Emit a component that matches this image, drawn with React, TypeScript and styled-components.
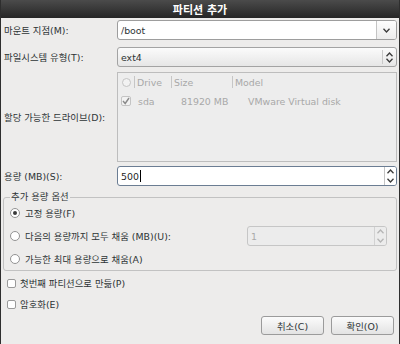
import styled, { createGlobalStyle } from "styled-components";

const GlobalStyle = createGlobalStyle`
  html, body {
    margin: 0;
    padding: 0;
    background-color: #edeceb;
  }
  * {
    box-sizing: border-box;
  }
`;

const FONT = `"DejaVu Sans", "Noto Sans CJK KR", sans-serif`;

const Window = styled.div`
  width: 400px;
  height: 344px;
  display: flex;
  flex-direction: column;
  background-color: #edeceb;
  border-left: 1px solid #2e2e2e;
  border-right: 1px solid #2e2e2e;
  font-family: ${FONT};
  font-size: 9.4px;
  color: #2e3436;
  overflow: hidden;
`;

const TitleBar = styled.div`
  height: 18px;
  flex: none;
  display: flex;
  align-items: center;
  justify-content: center;
  background: linear-gradient(#4b4b4b, #262626);
  color: #ffffff;
  font-weight: bold;
  font-size: 11px;
`;

const Body = styled.div`
  flex: 1;
  display: flex;
  flex-direction: column;
  padding: 2px 2px 0 2px;
`;

const FormGrid = styled.div`
  display: grid;
  grid-template-columns: 114px 1fr;
  align-items: center;
`;

const Label = styled.label<{ $topGap?: number }>`
  padding-left: 1px;
  margin-top: ${(p) => p.$topGap ?? 0}px;
  white-space: nowrap;
`;

const Field = styled.div`
  display: flex;
  height: 20px;
  border: 1px solid #9d9d9d;
  border-radius: 3px;
  background-color: #ffffff;
  overflow: hidden;
`;

const FieldText = styled.div<{ $pad?: number }>`
  flex: 1;
  display: flex;
  align-items: center;
  padding-left: ${(p) => p.$pad ?? 3}px;
`;

const DropButton = styled.div`
  width: 20px;
  display: flex;
  align-items: center;
  justify-content: center;
  border-left: 1px solid #c4c4c4;
  background: linear-gradient(#fdfdfd, #ececec);
`;

const Combo = styled.div`
  display: flex;
  align-items: center;
  height: 20px;
  margin-top: 7px;
  padding: 0 3px 0 3px;
  border: 1px solid #a3a3a3;
  border-radius: 3px;
  background: linear-gradient(#fbfbfb, #e6e6e6);
`;

const ComboSep = styled.div`
  width: 1px;
  height: 14px;
  background-color: #c8c8c8;
  margin-right: 3px;
`;

const ArrowStack = styled.div`
  display: flex;
  flex-direction: column;
  gap: 1px;
`;

const DriveList = styled.div`
  height: 90px;
  margin-top: 5px;
  border: 1px solid #bdbdbd;
  background-color: #ededed;
  color: #a8a8a8;
`;

const ListHeader = styled.div`
  display: grid;
  grid-template-columns: 16px 37px 61px 1fr;
  height: 18px;
  align-items: center;
`;

const HeadCell = styled.div<{ $sep?: boolean }>`
  display: flex;
  align-items: center;
  height: 12px;
  padding-left: ${(p) => (p.$sep ? 2 : 4)}px;
  border-left: ${(p) => (p.$sep ? "1px solid #c6c6c6" : "none")};
`;

const ListRow = styled.div`
  display: grid;
  grid-template-columns: 17px 43px 67px 1fr;
  height: 20px;
  align-items: center;
  padding-left: 3px;
`;

const Box = styled.span<{ $size?: number; $dim?: boolean; $round?: boolean }>`
  width: ${(p) => p.$size ?? 10}px;
  height: ${(p) => p.$size ?? 10}px;
  display: inline-flex;
  align-items: center;
  justify-content: center;
  flex: none;
  border: 1px solid ${(p) => (p.$dim ? "#c4c4c4" : "#9a9a9a")};
  border-radius: ${(p) => (p.$round ? "50%" : "2px")};
  background-color: ${(p) => (p.$dim ? "#f2f2f2" : "#ffffff")};
`;

const SpinField = styled.div<{ $disabled?: boolean; $topGap?: number }>`
  display: flex;
  height: 20px;
  margin-top: ${(p) => p.$topGap ?? 0}px;
  border: 1px solid ${(p) => (p.$disabled ? "#c6c6c6" : "#6b7d93")};
  border-radius: 3px;
  background-color: ${(p) => (p.$disabled ? "#ececec" : "#ffffff")};
  color: ${(p) => (p.$disabled ? "#a9a9a9" : "#1e1e1e")};
  overflow: hidden;
`;

const SpinButtons = styled.div<{ $disabled?: boolean }>`
  width: 12px;
  display: flex;
  flex-direction: column;
  border-left: 1px solid ${(p) => (p.$disabled ? "#d2d2d2" : "#c4c4c4")};
  background-color: ${(p) => (p.$disabled ? "#ececec" : "#ffffff")};
`;

const SpinHalf = styled.div`
  flex: 1;
  display: flex;
  align-items: center;
  justify-content: center;
`;

const Caret = styled.span`
  width: 1px;
  height: 12px;
  background-color: #000;
  margin-left: 1px;
`;

const Frame = styled.fieldset`
  margin: 5px 0 0 0;
  padding: 0 0 1px 6px;
  border: 1px solid #c2c2c2;
  border-radius: 3px;
  display: flex;
  flex-direction: column;
  gap: 3px;
`;

const Legend = styled.legend`
  padding: 0 1px;
  margin-left: 0;
  line-height: 12px;
`;

const OptionRow = styled.div<{ $gap?: number }>`
  display: flex;
  align-items: center;
  gap: ${(p) => p.$gap ?? 5}px;
  height: 20px;
`;

const Radio = styled.span<{ $on?: boolean }>`
  width: 10px;
  height: 10px;
  flex: none;
  border-radius: 50%;
  border: 1px solid #939393;
  background: #ffffff;
  display: inline-flex;
  align-items: center;
  justify-content: center;

  &::after {
    content: "";
    width: 4px;
    height: 4px;
    border-radius: 50%;
    background-color: ${(p) => (p.$on ? "#3a3a3a" : "transparent")};
  }
`;

const FillSpin = styled.div`
  margin-left: auto;
  margin-right: 9px;
  width: 140px;
`;

const CheckList = styled.div`
  display: flex;
  flex-direction: column;
  gap: 1px;
  margin-top: 2px;
  padding-left: 4px;
`;

const Buttons = styled.div`
  display: flex;
  justify-content: flex-end;
  gap: 7px;
  padding-right: 3px;
  margin-top: 2px;
`;

const Button = styled.button`
  width: 63px;
  height: 19px;
  padding: 0;
  font-family: ${FONT};
  font-size: 9.4px;
  color: #2e3436;
  border: 1px solid #9b9b9b;
  border-radius: 3px;
  background: linear-gradient(#fbfbfb, #e3e3e3);
`;

const Chevron = ({ up, color = "#3a3a3a" }: { up?: boolean; color?: string }) => (
  <svg width="7" height="5" viewBox="0 0 7 5">
    <path
      d={up ? "M0.5 4.2 L3.5 1 L6.5 4.2" : "M0.5 0.8 L3.5 4 L6.5 0.8"}
      fill="none"
      stroke={color}
      strokeWidth="1.3"
    />
  </svg>
);

const Check = ({ color = "#666" }: { color?: string }) => (
  <svg width="8" height="8" viewBox="0 0 8 8">
    <path d="M1 4 L3.2 6.5 L7 1" fill="none" stroke={color} strokeWidth="1.4" />
  </svg>
);

export default function App() {
  return (
    <Window>
      <GlobalStyle />
      <TitleBar>파티션 추가</TitleBar>
      <Body>
        <FormGrid>
          <Label>마운트 지점(M):</Label>
          <Field>
            <FieldText>/boot</FieldText>
            <DropButton>
              <Chevron />
            </DropButton>
          </Field>

          <Label $topGap={7}>파일시스템 유형(T):</Label>
          <Combo>
            <FieldText $pad={0}>ext4</FieldText>
            <ComboSep />
            <ArrowStack>
              <Chevron up />
              <Chevron />
            </ArrowStack>
          </Combo>

          <Label $topGap={5}>할당 가능한 드라이브(D):</Label>
          <DriveList>
            <ListHeader>
              <HeadCell>
                <Box $size={9} $dim $round />
              </HeadCell>
              <HeadCell $sep>Drive</HeadCell>
              <HeadCell $sep>Size</HeadCell>
              <HeadCell $sep>Model</HeadCell>
            </ListHeader>
            <ListRow>
              <Box $dim>
                <Check color="#8a8a8a" />
              </Box>
              <span>sda</span>
              <span>81920 MB</span>
              <span>VMware Virtual disk</span>
            </ListRow>
          </DriveList>

          <Label $topGap={4}>용량 (MB)(S):</Label>
          <SpinField $topGap={4}>
            <FieldText>
              500
              <Caret />
            </FieldText>
            <SpinButtons>
              <SpinHalf>
                <Chevron up />
              </SpinHalf>
              <SpinHalf>
                <Chevron />
              </SpinHalf>
            </SpinButtons>
          </SpinField>
        </FormGrid>

        <Frame>
          <Legend>추가 용량 옵션</Legend>
          <OptionRow>
            <Radio $on />
            고정 용량(F)
          </OptionRow>
          <OptionRow>
            <Radio />
            다음의 용량까지 모두 채움 (MB)(U):
            <FillSpin>
              <SpinField $disabled>
                <FieldText>1</FieldText>
                <SpinButtons $disabled>
                  <SpinHalf>
                    <Chevron up color="#b5b5b5" />
                  </SpinHalf>
                  <SpinHalf>
                    <Chevron color="#b5b5b5" />
                  </SpinHalf>
                </SpinButtons>
              </SpinField>
            </FillSpin>
          </OptionRow>
          <OptionRow>
            <Radio />
            가능한 최대 용량으로 채움(A)
          </OptionRow>
        </Frame>

        <CheckList>
          <OptionRow $gap={4}>
            <Box $size={9} />
            첫번째 파티션으로 만듦(P)
          </OptionRow>
          <OptionRow $gap={4}>
            <Box $size={9} />
            암호화(E)
          </OptionRow>
        </CheckList>

        <Buttons>
          <Button>취소(C)</Button>
          <Button>확인(O)</Button>
        </Buttons>
      </Body>
    </Window>
  );
}
